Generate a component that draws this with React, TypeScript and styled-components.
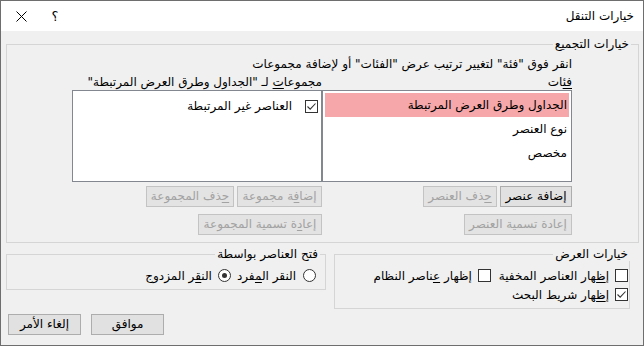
import React from 'react';
import styled, { createGlobalStyle } from 'styled-components';

const GlobalStyle = createGlobalStyle`
  html, body {
    margin: 0;
    padding: 0;
    background: #ffffff;
  }
  body {
    font-family: 'Segoe UI', 'DejaVu Sans', sans-serif;
    font-size: 12px;
    color: #000;
  }
  * {
    box-sizing: border-box;
  }
`;

const Window = styled.div`
  width: 644px;
  height: 346px;
  border: 1px solid #6e6e6e;
  background: #f0f0f0;
  display: flex;
  flex-direction: column;
  direction: rtl;
  overflow: hidden;
`;

const TitleBar = styled.div`
  height: 30px;
  background: #fff;
  display: flex;
  align-items: center;
  padding-right: 9px;
`;

const Title = styled.div`
  line-height: 16px;
`;

const TitleButtons = styled.div`
  margin-right: auto;
  display: flex;
  align-items: center;
  padding-left: 3px;
`;

const TitleButton = styled.div`
  width: 34px;
  height: 30px;
  display: flex;
  align-items: center;
  justify-content: center;
  font-size: 13px;
`;

const Body = styled.div`
  flex: 1;
  display: flex;
  flex-direction: column;
  padding: 6px 4px 0 5px;
`;

const Group = styled.fieldset<{ $w?: number }>`
  margin: 0;
  padding: 0;
  min-width: 0;
  border: 1px solid #d5d5d5;
  ${p => (p.$w ? `width: ${p.$w}px;` : '')}
`;

const Legend = styled.legend<{ $inset: number }>`
  padding: 0 2px;
  margin-right: ${p => p.$inset}px;
  line-height: 14px;
`;

const GroupContent = styled.div`
  padding: 5px 66px 7px 65px;
`;

const Instruction = styled.div`
  line-height: 16px;
  white-space: nowrap;
`;

const Columns = styled.div`
  margin-top: 2px;
  display: grid;
  grid-template-columns: 250px 250px;
`;

const Column = styled.div`
  display: flex;
  flex-direction: column;
`;

const ColLabel = styled.div`
  line-height: 16px;
  white-space: nowrap;
`;

const ListBox = styled.div`
  height: 92px;
  background: #fff;
  border: 1px solid #828790;
  padding: 2px;
`;

const ListRow = styled.div<{ $selected?: boolean }>`
  height: 24px;
  line-height: 24px;
  padding-right: 2px;
  background: ${p => (p.$selected ? '#f5a7a9' : 'transparent')};
  white-space: nowrap;
`;

const CheckRow = styled.div`
  display: flex;
  align-items: center;
  gap: 13px;
  padding: 5px 1px 0 0;
  line-height: 16px;
`;

const Box = styled.span<{ $round?: boolean }>`
  width: 13px;
  height: 13px;
  flex: none;
  border: 1px solid #333;
  background: #fff;
  border-radius: ${p => (p.$round ? '50%' : '0')};
  display: flex;
  align-items: center;
  justify-content: center;
`;

const Dot = styled.span`
  width: 5px;
  height: 5px;
  border-radius: 50%;
  background: #333;
`;

const ButtonRow = styled.div<{ $top: number }>`
  display: flex;
  gap: 3px;
  margin-top: ${p => p.$top}px;
`;

const Button = styled.button<{ $w: number }>`
  width: ${p => p.$w}px;
  height: 21px;
  padding: 0;
  font: inherit;
  line-height: 19px;
  background: #e1e1e1;
  border: 1px solid #adadad;
  border-radius: 0;
  color: #000;
  white-space: nowrap;
  &:disabled {
    background: #e3e3e3;
    border-color: #c3c3c3;
    color: #a2a2a2;
  }
`;

const Key = styled.span`
  text-decoration: underline;
  text-underline-offset: 2px;
`;

const BottomRow = styled.div`
  display: flex;
  align-items: flex-start;
  gap: 8px;
  margin: 4px 9px 0 0;
`;

const OptionsContent = styled.div<{ $pr: number }>`
  padding: 6px ${p => p.$pr}px 5px 0;
  display: flex;
  flex-direction: column;
  gap: 2px;
`;

const OptionLine = styled.div`
  display: flex;
  align-items: center;
  height: 17px;
`;

const Option = styled.label<{ $gap: number; $after?: number }>`
  display: flex;
  align-items: center;
  gap: ${p => p.$gap}px;
  margin-left: ${p => p.$after ?? 0}px;
  white-space: nowrap;
  line-height: 16px;
`;

const Footer = styled.div`
  display: flex;
  justify-content: flex-end;
  gap: 10px;
  margin-top: 5px;
  padding-left: 2px;
`;

const Check = () => (
  <svg width="11" height="11" viewBox="0 0 11 11">
    <polyline points="1.5,5.5 4.2,8.2 9.5,2.5" fill="none" stroke="#333" strokeWidth="1.1" />
  </svg>
);

const CloseIcon = () => (
  <svg width="11" height="11" viewBox="0 0 11 11">
    <path d="M0.5 0.5 L10.5 10.5 M10.5 0.5 L0.5 10.5" stroke="#000" strokeWidth="1" />
  </svg>
);

const categories = ['الجداول وطرق العرض المرتبطة', 'نوع العنصر', 'مخصص'];

const App: React.FC = () => (
  <>
    <GlobalStyle />
    <Window>
      <TitleBar>
        <Title>خيارات التنقل</Title>
        <TitleButtons>
          <TitleButton>؟</TitleButton>
          <TitleButton>
            <CloseIcon />
          </TitleButton>
        </TitleButtons>
      </TitleBar>

      <Body>
        <Group>
          <Legend $inset={7}>خيارات التجميع</Legend>
          <GroupContent>
            <Instruction>انقر فوق "فئة" لتغيير ترتيب عرض "الفئات" أو لإضافة مجموعات</Instruction>
            <Columns>
              <Column>
                <ColLabel>
                  <Key>فئ</Key>ات
                </ColLabel>
                <ListBox>
                  {categories.map((c, i) => (
                    <ListRow key={c} $selected={i === 0}>
                      {c}
                    </ListRow>
                  ))}
                </ListBox>
                <ButtonRow $top={4}>
                  <Button type="button" $w={72}>
                    إضافة عنصر
                  </Button>
                  <Button type="button" $w={74} disabled>
                    <Key>ح</Key>ذف العنصر
                  </Button>
                </ButtonRow>
                <ButtonRow $top={7}>
                  <Button type="button" $w={108} disabled>
                    <Key>إ</Key>عادة تسمية العنصر
                  </Button>
                </ButtonRow>
              </Column>

              <Column>
                <ColLabel>
                  مجموعا<Key>ت</Key> لـ "الجداول وطرق العرض المرتبطة"
                </ColLabel>
                <ListBox>
                  <CheckRow>
                    <Box>
                      <Check />
                    </Box>
                    <span>العناصر غير المرتبطة</span>
                  </CheckRow>
                </ListBox>
                <ButtonRow $top={4}>
                  <Button type="button" $w={85} disabled>
                    إضا<Key>ف</Key>ة مجموعة
                  </Button>
                  <Button type="button" $w={88} disabled>
                    <Key>ح</Key>ذف المجموعة
                  </Button>
                </ButtonRow>
                <ButtonRow $top={7}>
                  <Button type="button" $w={124} disabled>
                    إعا<Key>د</Key>ة تسمية المجموعة
                  </Button>
                </ButtonRow>
              </Column>
            </Columns>
          </GroupContent>
        </Group>

        <BottomRow>
          <Group $w={296}>
            <Legend $inset={-1}>خيارات العرض</Legend>
            <OptionsContent $pr={1}>
              <OptionLine>
                <Option $gap={6} $after={8}>
                  <Box />
                  <span>
                    إ<Key>ظ</Key>هار العناصر المخفية
                  </span>
                </Option>
                <Option $gap={6}>
                  <Box />
                  <span>
                    إظهار <Key>ع</Key>ناصر النظام
                  </span>
                </Option>
              </OptionLine>
              <OptionLine>
                <Option $gap={6}>
                  <Box>
                    <Check />
                  </Box>
                  <span>
                    إ<Key>ظ</Key>هار شريط البحث
                  </span>
                </Option>
              </OptionLine>
            </OptionsContent>
          </Group>

          <Group $w={320}>
            <Legend $inset={5}>فتح العناصر بواسطة</Legend>
            <OptionsContent $pr={9}>
              <OptionLine>
                <Option $gap={7} $after={6}>
                  <Box $round />
                  <span>
                    النقر ال<Key>م</Key>فرد
                  </span>
                </Option>
                <Option $gap={6}>
                  <Box $round>
                    <Dot />
                  </Box>
                  <span>
                    الن<Key>ق</Key>ر المزدوج
                  </span>
                </Option>
              </OptionLine>
            </OptionsContent>
          </Group>
        </BottomRow>

        <Footer>
          <Button type="button" $w={73}>
            موافق
          </Button>
          <Button type="button" $w={73}>
            إلغاء الأمر
          </Button>
        </Footer>
      </Body>
    </Window>
  </>
);

export default App;
